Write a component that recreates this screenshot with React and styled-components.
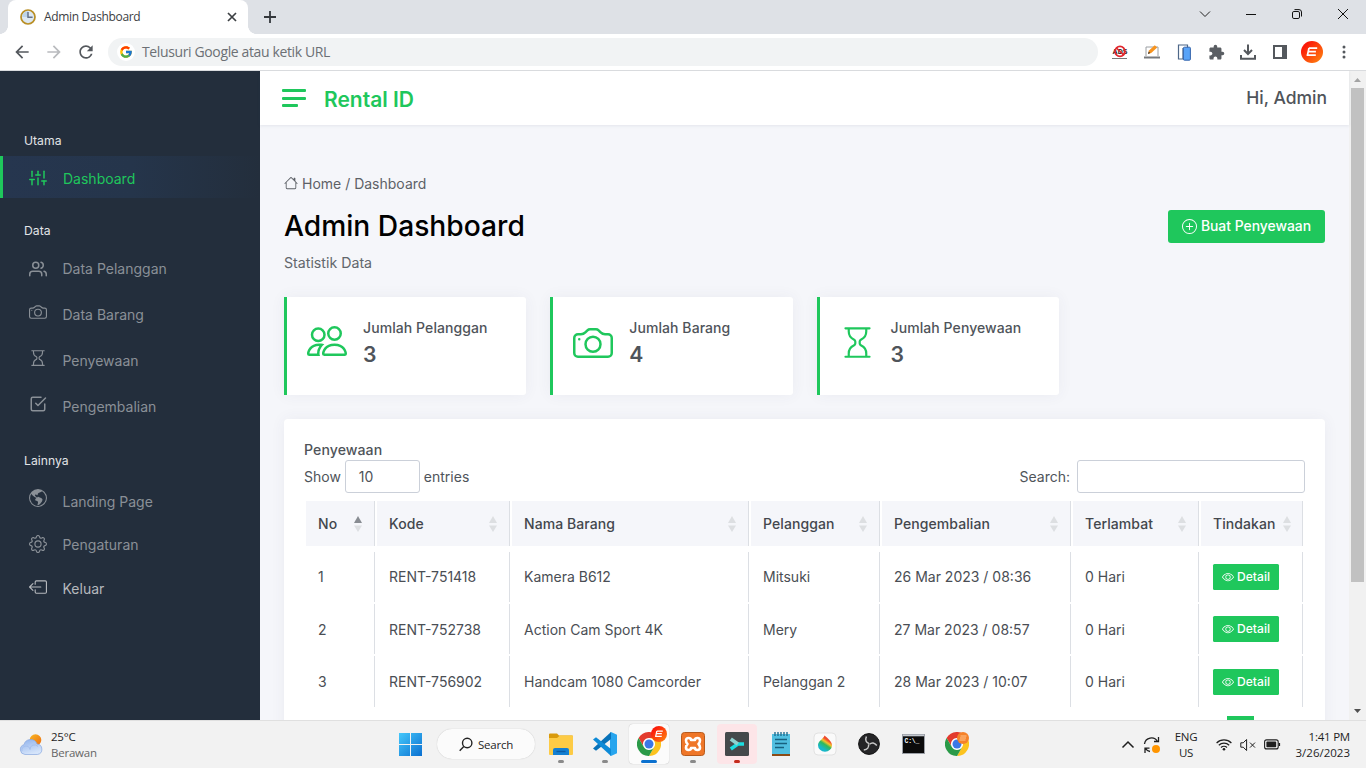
import React from "react";
import styled, { createGlobalStyle } from "styled-components";
import { FiSliders, FiUsers, FiCheckSquare } from "react-icons/fi";
import {
  BsCamera,
  BsHourglass,
  BsGlobeAmericas,
  BsGear,
  BsBoxArrowLeft,
  BsHouse,
  BsPlusCircle,
  BsPeople,
  BsEye,
} from "react-icons/bs";
import { FcGoogle } from "react-icons/fc";
import { MdExtension, MdArrowBack, MdArrowForward, MdRefresh } from "react-icons/md";

const GREEN = "#1fc75c";
const INK = "#4f545a";
const SYSTEM = '"Open Sans", "Noto Sans", sans-serif';

const GlobalStyle = createGlobalStyle`
  *, *::before, *::after { box-sizing: border-box; }
  body { margin: 0; overflow: hidden; font-family: Inter, "Liberation Sans", sans-serif; }
  svg { display: block; flex: none; }
`;

const Screen = styled.div`
  width: 1366px;
  height: 768px;
  display: flex;
  flex-direction: column;
  overflow: hidden;
  background: #fff;
`;

/* ---------- browser chrome ---------- */

const TabStrip = styled.div`
  height: 34px;
  flex: none;
  display: flex;
  align-items: stretch;
  background: #dee1e6;
  padding-left: 8px;
`;

const Tab = styled.div`
  position: relative;
  width: 240px;
  display: flex;
  align-items: center;
  padding: 0 10px 0 12px;
  background: #fff;
  border-radius: 8px 8px 0 0;
  font: 400 12px/16px ${SYSTEM};
  letter-spacing: -0.34px;
  color: #3c4043;
  &::before, &::after {
    content: "";
    position: absolute;
    bottom: 0;
    width: 8px;
    height: 8px;
  }
  &::before { left: -8px; background: radial-gradient(circle at 0 0, transparent 7.6px, #fff 8px); }
  &::after { right: -8px; background: radial-gradient(circle at 100% 0, transparent 7.6px, #fff 8px); }
`;

const TabTitle = styled.span`
  flex: 1;
  margin-left: 8px;
`;

const NewTab = styled.div`
  display: flex;
  align-items: center;
  padding-left: 15px;
  flex: 1;
`;

const WindowButtons = styled.div`
  display: flex;
  width: 184px;
  height: 28px;
`;

const WindowButton = styled.div`
  width: 46px;
  display: flex;
  align-items: center;
  justify-content: center;
`;

const Toolbar = styled.div`
  height: 37px;
  flex: none;
  display: flex;
  align-items: center;
  background: #fff;
  border-bottom: 1px solid #d9dbde;
  padding-left: 12px;
  color: #5a5e63;
`;

const NavButton = styled.span`
  display: flex;
  width: 32px;
  color: ${(p) => (p.$off ? "#b9bbbe" : "#54585d")};
`;

const Omnibox = styled.div`
  width: 990px;
  height: 28px;
  border-radius: 14px;
  background: #f1f3f4;
  display: flex;
  align-items: center;
  gap: 7px;
  padding-left: 9px;
  font: 400 14px/20px ${SYSTEM};
  letter-spacing: -0.37px;
  color: #6c7075;
`;

const GoogleDisc = styled.span`
  width: 18px;
  height: 18px;
  border-radius: 50%;
  background: #fff;
  display: grid;
  place-items: center;
`;

const Extensions = styled.div`
  display: flex;
  align-items: center;
  padding-left: 6px;
`;

const ExtensionSlot = styled.span`
  width: 32px;
  display: flex;
  justify-content: center;
`;

/* ---------- page ---------- */

const Page = styled.div`
  height: 649px;
  flex: none;
  display: flex;
  overflow: hidden;
  background: #f5f6fa;
`;

const Sidebar = styled.nav`
  width: 260px;
  flex: none;
  background: #232e3c;
  padding-top: 60px;
`;

const NavHeading = styled.div`
  height: 20px;
  line-height: 20px;
  margin: ${(p) => p.$margin};
  padding-left: 24px;
  font-size: 12.2px;
  color: #e2e4e7;
`;

const NavItem = styled.div`
  height: ${(p) => p.$height}px;
  display: flex;
  align-items: center;
  border-left: 3px solid ${(p) => (p.$active ? GREEN : "transparent")};
  background: ${(p) => (p.$active ? "linear-gradient(90deg, #26364f 0%, #25354b 50%, #232e3c 100%)" : "none")};
  color: ${(p) => (p.$active ? GREEN : p.$bright ? "#b5b8bc" : "#8a9097")};
  font-size: 14px;
`;

const NavIcon = styled.span`
  width: 18px;
  margin: 0 ${(p) => (p.$wide ? 16 : 15.5)}px 0 26px;
  padding-top: ${(p) => (p.$wide ? 2 : 0)}px;
  padding-bottom: ${(p) => p.$lift}px;
`;

const NavLabel = styled.span`
  padding-top: ${(p) => p.$drop || 0}px;
  padding-bottom: ${(p) => (p.$drop ? 0 : 1.5)}px;
`;

const Main = styled.main`
  flex: 1;
  min-width: 0;
  display: flex;
  flex-direction: column;
`;

const TopBar = styled.header`
  height: 54px;
  flex: none;
  display: flex;
  align-items: center;
  padding: 0 22px;
  background: #fff;
  box-shadow: 0 1px 3px rgba(60, 70, 90, 0.09);
  z-index: 1;
`;

const Burger = styled.div`
  display: flex;
  flex-direction: column;
  gap: 4.5px;
  width: 24px;
`;

const BurgerLine = styled.span`
  width: ${(p) => p.$width}px;
  height: 3px;
  border-radius: 1px;
  background: ${GREEN};
`;

const Brand = styled.div`
  flex: 1;
  margin-left: 18px;
  padding-top: 3px;
  font-size: 21px;
  line-height: 25px;
  font-weight: 600;
  color: ${GREEN};
`;

const Greeting = styled.div`
  font-size: 17.5px;
  line-height: 22px;
  padding-bottom: 1px;
  font-weight: 500;
  color: ${INK};
`;

const Content = styled.div`
  flex: 1;
  min-height: 0;
  overflow: hidden;
  padding: 47px 24px 0;
`;

const Breadcrumb = styled.div`
  height: 22px;
  display: flex;
  align-items: center;
  gap: 4px;
  font-size: 14px;
  color: #5d6167;
`;

const TitleRow = styled.div`
  height: 34px;
  margin-top: 15px;
  display: flex;
  align-items: center;
  justify-content: space-between;
`;

const Title = styled.h1`
  margin: 0;
  font-size: 28.2px;
  line-height: 34px;
  font-weight: 500;
  color: #000;
`;

const PrimaryButton = styled.button`
  height: 33px;
  width: 157px;
  display: flex;
  align-items: center;
  justify-content: center;
  gap: 3.5px;
  padding: 0 0 0 0.5px;
  border: 0;
  border-radius: 3px;
  background: ${GREEN};
  color: #fff;
  font: 500 13.9px/20px Inter, sans-serif;
  white-space: nowrap;
`;

const Subtitle = styled.div`
  height: 20px;
  line-height: 20px;
  margin-top: 10px;
  font-size: 14.2px;
  color: #62666c;
`;

const Stats = styled.div`
  display: grid;
  grid-template-columns: repeat(4, 1fr);
  gap: 24px;
  margin-top: 24px;
`;

const StatCard = styled.div`
  height: 98px;
  display: flex;
  align-items: flex-start;
  background: #fff;
  border-left: 3px solid ${GREEN};
  border-radius: 0 3px 3px 0;
  box-shadow: 0 0 15px rgba(60, 70, 100, 0.06);
  padding: 22px 0 0 20px;
  color: ${GREEN};
`;

const StatIcon = styled.span`
  padding-top: ${(p) => p.$top}px;
  width: ${(p) => p.$width}px;
`;

const StatText = styled.div`
  color: ${INK};
`;

const StatLabel = styled.div`
  font-size: 14px;
  line-height: 18px;
  font-weight: 500;
  letter-spacing: 0.08px;
  white-space: nowrap;
`;

const StatValue = styled.div`
  margin-top: 3px;
  font-size: 21.2px;
  line-height: 28px;
  font-weight: 600;
`;

const TablePanel = styled.section`
  height: 420px;
  margin-top: 24px;
  padding: 21px 20px 0;
  background: #fff;
  border-radius: 4px;
  box-shadow: 0 0 15px rgba(60, 70, 100, 0.06);
  color: ${INK};
  font-size: 14px;
`;

const PanelTitle = styled.div`
  height: 20px;
  line-height: 20px;
  font-weight: 500;
  font-size: 14.1px;
  letter-spacing: 0.08px;
`;

const Controls = styled.div`
  height: 33px;
  display: flex;
  align-items: center;
`;

const EntriesBox = styled.span`
  width: 75px;
  height: 33px;
  margin: 0 4px;
  padding-left: 13px;
  line-height: 32px;
  border: 1px solid #cbd0d9;
  border-radius: 3px;
`;

const SearchLabel = styled.span`
  margin: 0 7px 0 auto;
`;

const SearchBox = styled.span`
  width: 228px;
  height: 33px;
  border: 1px solid #cbd0d9;
  border-radius: 3px;
`;

const Grid = styled.div`
  display: grid;
  grid-template-columns: 69px 133px 237px 129px 189px 126px 102px;
  column-gap: 2px;
  margin: ${(p) => p.$top}px 0 0 2px;
`;

const Cell = styled.div`
  height: ${(p) => p.$height}px;
  display: flex;
  align-items: center;
  padding: 0 0 ${(p) => p.$lift || 0}px 12px;
  border-right: 1px solid #dcdfe4;
  white-space: nowrap;
  color: #4a4e54;
`;

const HeadCell = styled(Cell)`
  justify-content: space-between;
  padding-right: ${(p) => (p.$tight ? 11 : 12)}px;
  background: #f5f6fa;
  font-weight: 500;
  letter-spacing: 0.08px;
  color: #43474d;
`;

const DetailButton = styled.button`
  width: 66px;
  height: 26px;
  display: flex;
  align-items: center;
  justify-content: center;
  gap: 3px;
  padding: 0;
  border: 0;
  border-radius: 1.5px;
  background: ${GREEN};
  color: #fff;
  font: 500 12.1px/18px Inter, sans-serif;
`;

const PageMarker = styled.div`
  width: 27px;
  height: 33px;
  margin: 9px 51px 0 auto;
  background: ${GREEN};
`;

const Scrollbar = styled.div`
  width: 17px;
  flex: none;
  display: flex;
  flex-direction: column;
  align-items: center;
  background: #f1f1f1;
`;

const ScrollArrow = styled.div`
  height: 17px;
  display: grid;
  place-items: center;
`;

const ScrollThumb = styled.div`
  width: 13px;
  height: 494px;
  margin-bottom: 127px;
  background: #c1c1c1;
`;

/* ---------- taskbar ---------- */

const Taskbar = styled.footer`
  height: 48px;
  flex: none;
  display: flex;
  align-items: stretch;
  background: #f2f2f2;
  border-top: 1px solid #e0e0e0;
  font: 400 11.5px/16px ${SYSTEM};
  letter-spacing: -0.22px;
  color: #1f1f1f;
`;

const Weather = styled.div`
  width: 390px;
  display: flex;
  align-items: center;
  gap: 6px;
  padding-left: 19px;
`;

const Muted = styled.div`
  color: #666;
`;

const Slot = styled.div`
  position: relative;
  width: 40px;
  height: 40px;
  margin: 3px 4px 0 0;
  display: grid;
  place-items: center;
  border-radius: 4px;
  background: ${(p) => p.$fill || "transparent"};
  box-shadow: ${(p) => (p.$raised ? "0 0 1px rgba(0,0,0,.3)" : "none")};
`;

const RunMark = styled.span`
  position: absolute;
  bottom: 1px;
  left: 50%;
  width: ${(p) => p.$width}px;
  height: 3px;
  transform: translateX(-50%);
  border-radius: 2px;
  background: ${(p) => p.$color};
`;

const SearchPill = styled.div`
  width: 98px;
  height: 30px;
  margin: 8px 6px 0 3px;
  display: flex;
  align-items: center;
  gap: 5px;
  padding: 1px 0 0 21px;
  border-radius: 15px;
  background: #fbfbfb;
  box-shadow: 0 0 1px rgba(0, 0, 0, 0.25);
`;

const Tray = styled.div`
  margin-left: auto;
  display: flex;
  align-items: center;
  padding-right: 16px;
`;

const SyncSpot = styled.span`
  margin-left: 8px;
`;

const Language = styled.div`
  width: 30px;
  margin: 0 15px 0 10px;
  text-align: center;
`;

const TrayIcons = styled.div`
  display: flex;
  align-items: center;
  gap: 8px;
`;

const Clock = styled.div`
  width: 62px;
  margin-left: 7px;
  text-align: right;
`;

const DateText = styled.div`
  letter-spacing: 0;
`;

const BadgeSpot = styled.span`
  position: absolute;
  top: ${(p) => p.$top}px;
  right: ${(p) => p.$right}px;
`;

/* ---------- drawings ---------- */

const ClockFavicon = () => (
  <svg width="16" height="16" viewBox="0 0 16 16">
    <circle cx="8" cy="8" r="7" fill="#dce8f3" stroke="#b98f26" strokeWidth="1.7" />
    <path d="M8 8V2.2A5.8 5.8 0 0 0 2.2 8z" fill="#bcd4ea" />
    <path d="M8 3v5.2h4.6" fill="none" stroke="#65728a" strokeWidth="1.5" />
  </svg>
);

const AdsIcon = () => (
  <svg width="18" height="16" viewBox="0 0 18 16">
    <text x="1.6" y="9.8" fontFamily="Liberation Sans" fontSize="7" fontWeight="700" fill="#222">ADS</text>
    <circle cx="9" cy="7.4" r="5" fill="none" stroke="#e1262d" strokeWidth="1.7" />
    <path d="M5.4 4l7.2 6.8" stroke="#e1262d" strokeWidth="1.6" />
    <path d="M1 14.5h15" stroke="#777" strokeWidth="1" />
  </svg>
);

const LaptopIcon = () => (
  <svg width="18" height="16" viewBox="0 0 18 16">
    <path d="M3 12V3h12v9" fill="#fff" stroke="#9ca0a4" strokeWidth="1" />
    <path d="M1 12.5h16v2H1z" fill="#77797c" />
    <path d="M5 10l1-3.4 5.8-5.4 2.4 2.2-6 5.5z" fill="#f7931e" />
    <path d="M5 10l.7-2.5L7.2 9z" fill="#333" />
  </svg>
);

const DevicesIcon = () => (
  <svg width="15" height="17" viewBox="0 0 15 17">
    <path d="M1.5 1h9v3.5H6V15H1.5z" fill="#fff" stroke="#4d6788" strokeWidth="1.2" />
    <rect x="6.4" y="3.2" width="7" height="13" rx="1" fill="#58a3f8" stroke="#3565ac" strokeWidth="1" />
  </svg>
);

const DownloadIcon = () => (
  <svg width="18" height="18" viewBox="0 0 18 18" fill="none" stroke="#54585d" strokeWidth="2">
    <path d="M9 1.5v9M5 7l4 4 4-4M2 12v3.8h14V12" />
  </svg>
);

const SidePanelIcon = () => (
  <svg width="14" height="14" viewBox="0 0 14 14">
    <path d="M0 0h14v14H0zM2 2v10h7V2z" fill="#54585d" fillRule="evenodd" />
  </svg>
);

const Avatar = ({ size = 22 }) => (
  <svg width={size} height={size} viewBox="0 0 22 22">
    <defs>
      <linearGradient id="avatarFill" x1="0" y1="0" x2="1" y2="1">
        <stop offset="0.2" stopColor="#fb1a09" />
        <stop offset="1" stopColor="#ff8a10" />
      </linearGradient>
    </defs>
    <circle cx="11" cy="11" r="11" fill="url(#avatarFill)" />
    <path d="M8 7.2h8.2M7.3 10.6h7.6M5.6 14.2h9.2M8 7l-1.5 7" stroke="#fff" strokeWidth="1.7" fill="none" />
  </svg>
);

const SortArrows = ({ sorted }) => (
  <svg width="8" height="16" viewBox="0 0 8 16">
    <path d="M4 0l4 7H0z" fill={sorted ? "#888c92" : "#dddfe2"} />
    <path d="M4 16L0 9.4h8z" fill="#dddfe2" />
  </svg>
);

const ChromeLogo = () => {
  const blade = "M22.4 6A12 12 0 0 0 1.6 6L6.8 15A6 6 0 0 1 12 6z";
  return (
    <svg width="24" height="24" viewBox="0 0 24 24">
      <circle cx="12" cy="12" r="7" fill="#fff" />
      <path d={blade} fill="#e33b2e" />
      <path d={blade} fill="#fcc31e" transform="rotate(120 12 12)" />
      <path d={blade} fill="#2a9a48" transform="rotate(240 12 12)" />
      <circle cx="12" cy="12" r="4.5" fill="#3b78e7" />
    </svg>
  );
};

const PlainBadge = () => (
  <svg width="12" height="12" viewBox="0 0 12 12">
    <circle cx="6" cy="6" r="6" fill="#f5822a" />
    <path d="M3.5 4h6M3 6h6M2.5 8h6" stroke="#ffc590" strokeWidth="1" />
  </svg>
);

const WeatherIcon = () => (
  <svg width="26" height="24" viewBox="0 0 26 24">
    <defs>
      <linearGradient id="sun" x1="0" y1="0" x2="1" y2="1">
        <stop offset="0" stopColor="#f9b821" />
        <stop offset="1" stopColor="#ec6c13" />
      </linearGradient>
      <linearGradient id="cloud" x1="0" y1="0" x2="0.4" y2="1">
        <stop offset="0" stopColor="#8eb1ec" />
        <stop offset="1" stopColor="#d5e4fa" />
      </linearGradient>
    </defs>
    <circle cx="16.5" cy="7" r="5.8" fill="url(#sun)" />
    <path d="M6 21.5a5 5 0 0 1-1-9.8A6.8 6.8 0 0 1 18 11a5.3 5.3 0 0 1 .5 10.5z" fill="url(#cloud)" stroke="#88a8df" strokeWidth="0.7" />
    <path d="M3 18a4 4 0 0 1 8-1.5 4.5 4.5 0 0 1 8-3" fill="none" stroke="#a5c0ee" strokeWidth="1" />
  </svg>
);

const WindowsLogo = () => (
  <svg width="23" height="24" viewBox="0 0 23 24">
    <defs>
      <linearGradient id="win" x1="0" y1="0" x2="1" y2="1">
        <stop offset="0" stopColor="#45c8fb" />
        <stop offset="1" stopColor="#0a6fd0" />
      </linearGradient>
    </defs>
    <path d="M0 1h11v11H0zM12 1h11v11H12zM0 13h11v11H0zM12 13h11v11H12z" fill="url(#win)" />
  </svg>
);

const FolderIcon = () => (
  <svg width="24" height="22" viewBox="0 0 24 22">
    <path d="M0 1.5Q0 .5 1 .5h7l2 2H23q1 0 1 1V8H0z" fill="#d99a0c" />
    <path d="M0 5h8l3-2.5h12q1 0 1 1V21q0 1-1 1H1q-1 0-1-1z" fill="#fdcb45" />
    <path d="M4 22v-5q0-2 2-2h12q2 0 2 2v5z" fill="#137fd2" />
    <path d="M7.5 18.5h9" stroke="#0b5ba5" strokeWidth="1.4" />
  </svg>
);

const CodeIcon = () => (
  <svg width="24" height="24" viewBox="0 0 24 24">
    <path d="M18 0l6 2.7v18.6L18 24l-1-1V1z" fill="#27a5ee" />
    <path d="M18 0v7L3 18.8 0 16.5z" fill="#0872b9" />
    <path d="M18 24v-7L3 5.2 0 7.5z" fill="#0d8ad7" />
  </svg>
);

const XamppIcon = () => (
  <svg width="24" height="24" viewBox="0 0 24 24">
    <rect x="0.5" y="0.5" width="23" height="23" rx="3" fill="#ef7628" stroke="#b65a1d" />
    <path
      d="M7.5 6Q5 6 5 8.5q0 2 1.5 3.5Q5 13.5 5 15.5 5 18 7.500 18q2.500 0 2.500-2h4q0 2 2.500 2 2.500 0 2.500-2.500 0-2-1.500-3.500Q19 10.500 19 8.500 19 6 16.500 6 14 6 14 8h-4q0-2-2.500-2z"
      fill="none"
      stroke="#fff"
      strokeWidth="2.6"
      strokeLinejoin="round"
    />
  </svg>
);

const TerminalIcon = () => (
  <svg width="24" height="24" viewBox="0 0 24 24">
    <rect width="24" height="24" rx="1.5" fill="#45494b" />
    <path d="M5.8 17l7-5H19" fill="none" stroke="#1cdde0" strokeWidth="3.6" />
    <path d="M5.8 7l7 5" fill="none" stroke="#8fd2cf" strokeWidth="3.6" />
  </svg>
);

const NotepadIcon = () => (
  <svg width="20" height="24" viewBox="0 0 20 24">
    <rect x="1" y="2" width="18" height="20" fill="#50bfe0" />
    <path d="M1 22h18v2H1z" fill="#8b4b16" />
    <path d="M4 0v4M7 0v4M10 0v4M13 0v4M16 0v4" stroke="#216e91" strokeWidth="1.4" />
    <path d="M4 7.5h12M4 11.5h12M4 15.5h9" stroke="#17617f" strokeWidth="1.5" />
  </svg>
);

const PaintIcon = () => (
  <svg width="24" height="24" viewBox="0 0 24 24">
    <defs>
      <linearGradient id="drop" x1="0.8" y1="0.1" x2="0.3" y2="0.95">
        <stop offset="0.22" stopColor="#ef4c2e" />
        <stop offset="0.38" stopColor="#f7c22c" />
        <stop offset="0.55" stopColor="#2fb95c" />
        <stop offset="0.85" stopColor="#19b7c9" />
      </linearGradient>
    </defs>
    <rect x="1" y="1" width="22" height="22" rx="4" fill="#fafafa" stroke="#e2e2e2" />
    <path d="M11.5 3.5c3 2.5 7.5 6 7.5 9.7a7 6.6 0 0 1-14 0C5 9 10 7.5 11.5 3.5z" fill="url(#drop)" />
  </svg>
);

const ObsIcon = () => (
  <svg width="22" height="22" viewBox="0 0 22 22">
    <circle cx="11" cy="11" r="10.4" fill="#252527" stroke="#111" />
    <g fill="none" stroke="#c8c8c8" strokeWidth="1.5">
      <path d="M11 10.5c-3-1-4-3.6-2.6-7" />
      <path d="M11 10.5c-3-1-4-3.6-2.6-7" transform="rotate(120 11 11)" />
      <path d="M11 10.5c-3-1-4-3.6-2.6-7" transform="rotate(240 11 11)" />
    </g>
  </svg>
);

const ConsoleIcon = () => (
  <svg width="23" height="20" viewBox="0 0 23 20">
    <rect x="0.5" y="0.5" width="22" height="19" fill="#0b0b0b" stroke="#9b9fa6" />
    <path d="M1 1.5h21" stroke="#c4c8cf" strokeWidth="1.6" />
    <text x="2.6" y="9.4" fontFamily="Liberation Mono" fontSize="6.4" fontWeight="700" fill="#fff">C:\_</text>
  </svg>
);

const SearchGlass = () => (
  <svg width="15" height="15" viewBox="0 0 15 15" fill="none" stroke="#222" strokeWidth="1.4">
    <circle cx="9.2" cy="6" r="4.7" />
    <path d="M5.8 9.6L1.7 13.8" />
  </svg>
);

const SyncIcon = () => (
  <svg width="18" height="18" viewBox="0 0 18 18" fill="none" stroke="#1f1f1f" strokeWidth="1.3">
    <path d="M1.5 8a7 7 0 0 1 13-2.5M15.5 1v4.5H11M7 15.5a7 7 0 0 1-4.5-3.2M2 17v-4.8h4.5" />
    <circle cx="13" cy="13" r="4" fill="#ff9500" stroke="none" />
  </svg>
);

const WifiIcon = () => (
  <svg width="16" height="13" viewBox="0 0 16 13" fill="none" stroke="#1f1f1f" strokeWidth="1.2">
    <path d="M.6 5a10.4 10.4 0 0 1 14.8 0M2.8 7.3a7.4 7.4 0 0 1 10.4 0M5 9.5a4.3 4.3 0 0 1 6 0" />
    <circle cx="8" cy="11.3" r="1.3" fill="#1f1f1f" stroke="none" />
  </svg>
);

const MuteIcon = () => (
  <svg width="16" height="14" viewBox="0 0 16 14" fill="none" stroke="#1f1f1f" strokeWidth="1">
    <path d="M.8 4.8h2.4l3.4-3.3v11L3.2 9.2H.8zM10 4.6l5 5M15 4.6l-5 5" />
  </svg>
);

const BatteryIcon = () => (
  <svg width="17" height="11" viewBox="0 0 17 11">
    <rect x="0.6" y="0.9" width="13.6" height="9" rx="2" fill="none" stroke="#1f1f1f" strokeWidth="1.1" />
    <rect x="2.4" y="2.6" width="9.8" height="5.6" rx="0.8" fill="#1f1f1f" />
    <path d="M15.4 4v3" stroke="#1f1f1f" strokeWidth="1.4" />
  </svg>
);

/* ---------- data ---------- */

const mainLinks = [
  { label: "Data Pelanggan", Icon: FiUsers, height: 46, lift: 0 },
  { label: "Data Barang", Icon: BsCamera, height: 46, lift: 6 },
  { label: "Penyewaan", Icon: BsHourglass, height: 46, lift: 6 },
  { label: "Pengembalian", Icon: FiCheckSquare, height: 47, lift: 7 },
];

const otherLinks = [
  { label: "Landing Page", Icon: BsGlobeAmericas, height: 44, lift: 8 },
  { label: "Pengaturan", Icon: BsGear, height: 43, lift: 3 },
  { label: "Keluar", Icon: BsBoxArrowLeft, height: 44, lift: 4, bright: true },
];

const stats = [
  { label: "Jumlah Pelanggan", value: 3, Icon: BsPeople, size: 40, width: 56, top: 2 },
  { label: "Jumlah Barang", value: 4, Icon: BsCamera, size: 40, width: 56, top: 4 },
  { label: "Jumlah Penyewaan", value: 3, Icon: BsHourglass, size: 35, width: 51, top: 6 },
];

const columns = ["No", "Kode", "Nama Barang", "Pelanggan", "Pengembalian", "Terlambat", "Tindakan"];

const rentals = [
  ["1", "RENT-751418", "Kamera B612", "Mitsuki", "26 Mar 2023 / 08:36", "0 Hari"],
  ["2", "RENT-752738", "Action Cam Sport 4K", "Mery", "27 Mar 2023 / 08:57", "0 Hari"],
  ["3", "RENT-756902", "Handcam 1080 Camcorder", "Pelanggan 2", "28 Mar 2023 / 10:07", "0 Hari"],
];

const SidebarLink = ({ label, Icon, height, lift, active, bright, drop }) => (
  <NavItem $height={height} $active={active} $bright={bright}>
    <NavIcon $lift={lift} $wide={active}>
      <Icon size={18} />
    </NavIcon>
    <NavLabel $drop={drop}>{label}</NavLabel>
  </NavItem>
);

const Browser = () => (
  <>
    <TabStrip>
      <Tab>
        <ClockFavicon />
        <TabTitle>Admin Dashboard</TabTitle>
        <svg width="12" height="12" viewBox="0 0 12 12" stroke="#3c4043" strokeWidth="1.7">
          <path d="M2 2l8 8M10 2l-8 8" />
        </svg>
      </Tab>
      <NewTab>
        <svg width="14" height="14" viewBox="0 0 14 14" stroke="#34383c" strokeWidth="1.8">
          <path d="M7 1v12M1 7h12" />
        </svg>
      </NewTab>
      <WindowButtons>
        <WindowButton>
          <svg width="12" height="12" viewBox="0 0 12 12" fill="none" stroke="#222"><path d="M1 3.5l5 5 5-5" /></svg>
        </WindowButton>
        <WindowButton>
          <svg width="10" height="10" viewBox="0 0 10 10" stroke="#111"><path d="M0 5.5h10" /></svg>
        </WindowButton>
        <WindowButton>
          <svg width="10" height="10" viewBox="0 0 10 10" fill="none" stroke="#111">
            <rect x="0.5" y="2.5" width="7" height="7" rx="1.4" />
            <path d="M2.5.6H7A2.5 2.5 0 0 1 9.5 3v4.5" />
          </svg>
        </WindowButton>
        <WindowButton>
          <svg width="12" height="12" viewBox="0 0 12 12" stroke="#111"><path d="M1 1l10 10M11 1L1 11" /></svg>
        </WindowButton>
      </WindowButtons>
    </TabStrip>
    <Toolbar>
      <NavButton><MdArrowBack size={20} /></NavButton>
      <NavButton $off><MdArrowForward size={20} /></NavButton>
      <NavButton><MdRefresh size={20} /></NavButton>
      <Omnibox>
        <GoogleDisc><FcGoogle size={14} /></GoogleDisc>
        Telusuri Google atau ketik URL
      </Omnibox>
      <Extensions>
        <ExtensionSlot><AdsIcon /></ExtensionSlot>
        <ExtensionSlot><LaptopIcon /></ExtensionSlot>
        <ExtensionSlot><DevicesIcon /></ExtensionSlot>
        <ExtensionSlot><MdExtension size={17} /></ExtensionSlot>
        <ExtensionSlot><DownloadIcon /></ExtensionSlot>
        <ExtensionSlot><SidePanelIcon /></ExtensionSlot>
        <ExtensionSlot><Avatar /></ExtensionSlot>
        <ExtensionSlot>
          <svg width="4" height="14" viewBox="0 0 4 14" fill="#54585d">
            <circle cx="2" cy="2" r="1.5" /><circle cx="2" cy="7" r="1.5" /><circle cx="2" cy="12" r="1.5" />
          </svg>
        </ExtensionSlot>
      </Extensions>
    </Toolbar>
  </>
);

const Desktop = () => (
  <Taskbar>
    <Weather>
      <WeatherIcon />
      <div>
        <div>25°C</div>
        <Muted>Berawan</Muted>
      </div>
    </Weather>
    <Slot><WindowsLogo /></Slot>
    <SearchPill><SearchGlass />Search</SearchPill>
    <Slot><FolderIcon /><RunMark $width={6} $color="#8a8a8a" /></Slot>
    <Slot><CodeIcon /><RunMark $width={6} $color="#8a8a8a" /></Slot>
    <Slot $fill="#fbfbfb" $raised>
      <ChromeLogo />
      <BadgeSpot $top={2} $right={2}><Avatar size={16} /></BadgeSpot>
      <RunMark $width={16} $color="#0b71cf" />
    </Slot>
    <Slot><XamppIcon /><RunMark $width={6} $color="#8a8a8a" /></Slot>
    <Slot $fill="#fde5e8"><TerminalIcon /><RunMark $width={6} $color="#c42b1c" /></Slot>
    <Slot><NotepadIcon /></Slot>
    <Slot><PaintIcon /></Slot>
    <Slot><ObsIcon /></Slot>
    <Slot><ConsoleIcon /></Slot>
    <Slot><ChromeLogo /><BadgeSpot $top={8} $right={8}><PlainBadge /></BadgeSpot></Slot>
    <Tray>
      <svg width="14" height="9" viewBox="0 0 14 9" fill="none" stroke="#1f1f1f" strokeWidth="1.5"><path d="M1.5 7.5L7 2l5.5 5.5" /></svg>
      <SyncSpot><SyncIcon /></SyncSpot>
      <Language><div>ENG</div><div>US</div></Language>
      <TrayIcons><WifiIcon /><MuteIcon /><BatteryIcon /></TrayIcons>
      <Clock><div>1:41 PM</div><DateText>3/26/2023</DateText></Clock>
    </Tray>
  </Taskbar>
);

export default function App() {
  return (
    <Screen>
      <GlobalStyle />
      <Browser />
      <Page>
        <Sidebar>
          <NavHeading $margin="0 0 5px">Utama</NavHeading>
          <SidebarLink label="Dashboard" Icon={FiSliders} height={42} lift={0} drop={3} active />
          <NavHeading $margin="23px 0 5px">Data</NavHeading>
          {mainLinks.map((l) => <SidebarLink key={l.label} {...l} />)}
          <NavHeading $margin="20px 0 9px">Lainnya</NavHeading>
          {otherLinks.map((l) => <SidebarLink key={l.label} {...l} />)}
        </Sidebar>
        <Main>
          <TopBar>
            <Burger>
              <BurgerLine $width={24} />
              <BurgerLine $width={24} />
              <BurgerLine $width={16} />
            </Burger>
            <Brand>Rental ID</Brand>
            <Greeting>Hi, Admin</Greeting>
          </TopBar>
          <Content>
            <Breadcrumb><BsHouse size={14} /> Home / Dashboard</Breadcrumb>
            <TitleRow>
              <Title>Admin Dashboard</Title>
              <PrimaryButton><BsPlusCircle size={15} />Buat Penyewaan</PrimaryButton>
            </TitleRow>
            <Subtitle>Statistik Data</Subtitle>
            <Stats>
              {stats.map(({ label, value, Icon, size, width, top }) => (
                <StatCard key={label}>
                  <StatIcon $width={width} $top={top}><Icon size={size} /></StatIcon>
                  <StatText>
                    <StatLabel>{label}</StatLabel>
                    <StatValue>{value}</StatValue>
                  </StatText>
                </StatCard>
              ))}
            </Stats>
            <TablePanel>
              <PanelTitle>Penyewaan</PanelTitle>
              <Controls>
                Show <EntriesBox>10</EntriesBox> entries
                <SearchLabel>Search:</SearchLabel>
                <SearchBox />
              </Controls>
              <Grid $top={8}>
                {columns.map((c, i) => (
                  <HeadCell key={c} $height={45} $tight={i === 6}>
                    {c}
                    <SortArrows sorted={i === 0} />
                  </HeadCell>
                ))}
              </Grid>
              {rentals.map((row, r) => (
                <Grid key={row[1]} $top={r === 0 ? 6 : 2}>
                  {row.map((value, i) => (
                    <Cell key={i} $height={r === 2 ? 51 : 50} $lift={r === 0 ? 1 : 0}>{value}</Cell>
                  ))}
                  <Cell $height={r === 2 ? 51 : 50}>
                    <DetailButton><BsEye size={12} />Detail</DetailButton>
                  </Cell>
                </Grid>
              ))}
              <PageMarker />
            </TablePanel>
          </Content>
        </Main>
        <Scrollbar>
          <ScrollArrow>
            <svg width="7" height="4" viewBox="0 0 7 4" fill="#a3a3a3"><path d="M3.5 0L7 4H0z" /></svg>
          </ScrollArrow>
          <ScrollThumb />
          <svg width="7" height="4" viewBox="0 0 7 4" fill="#505050"><path d="M0 0h7L3.5 4z" /></svg>
        </Scrollbar>
      </Page>
      <Desktop />
    </Screen>
  );
}
